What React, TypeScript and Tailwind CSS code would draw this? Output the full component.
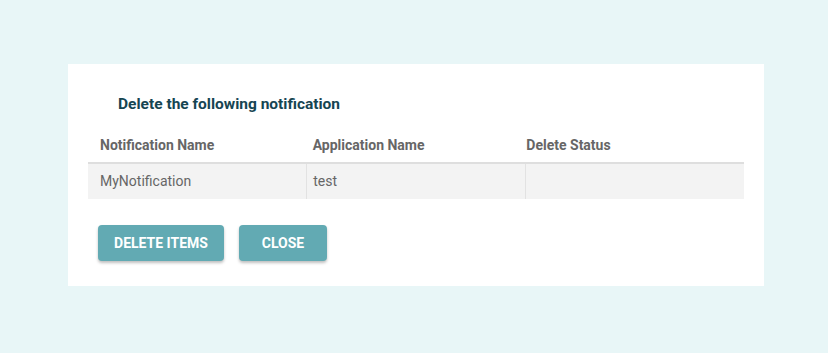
import React from 'react';

const rows = [{name: 'MyNotification', app: 'test', status: ''}];

export default function App() {
  return (
    <div className="min-h-[353px] w-full bg-[#e8f6f7] pt-[64px] pl-[68px] font-['Roboto',sans-serif]">
      <div className="w-[696px] h-[222px] bg-white px-5 pt-[29px]">
        <h2 className="ml-[30px] text-[15.5px] leading-[22px] font-bold text-[#164552]">
          Delete the following notification
        </h2>
        <table className="w-full table-fixed border-collapse text-[14px] mt-[13px]">
          <thead>
            <tr className="border-b-2 border-[#dedede] h-[35px]">
              <th className="text-left font-bold text-[#666] px-3">Notification Name</th>
              <th className="text-left font-bold text-[#666] px-[6px]">Application Name</th>
              <th className="text-left font-bold text-[#666] px-[1px]">Delete Status</th>
            </tr>
          </thead>
          <tbody>
            {rows.map((r) => (
              <tr key={r.name} className="bg-[#f3f3f3] h-[36px] text-[#666]">
                <td className="px-3">{r.name}</td>
                <td className="px-[6px] border-l border-[#e2e2e2]">{r.app}</td>
                <td className="border-l border-[#e2e2e2]">{r.status}</td>
              </tr>
            ))}
          </tbody>
        </table>
        <div className="flex gap-[15px] mt-[26px] ml-[10px]">
          <button className="w-[126px] h-[36px] rounded bg-[#62aab3] text-white text-[14px] font-bold shadow-[0_2px_3px_rgba(0,0,0,0.25)]">
            DELETE ITEMS
          </button>
          <button className="w-[88px] h-[36px] rounded bg-[#62aab3] text-white text-[14px] font-bold shadow-[0_2px_3px_rgba(0,0,0,0.25)]">
            CLOSE
          </button>
        </div>
      </div>
    </div>
  );
}
